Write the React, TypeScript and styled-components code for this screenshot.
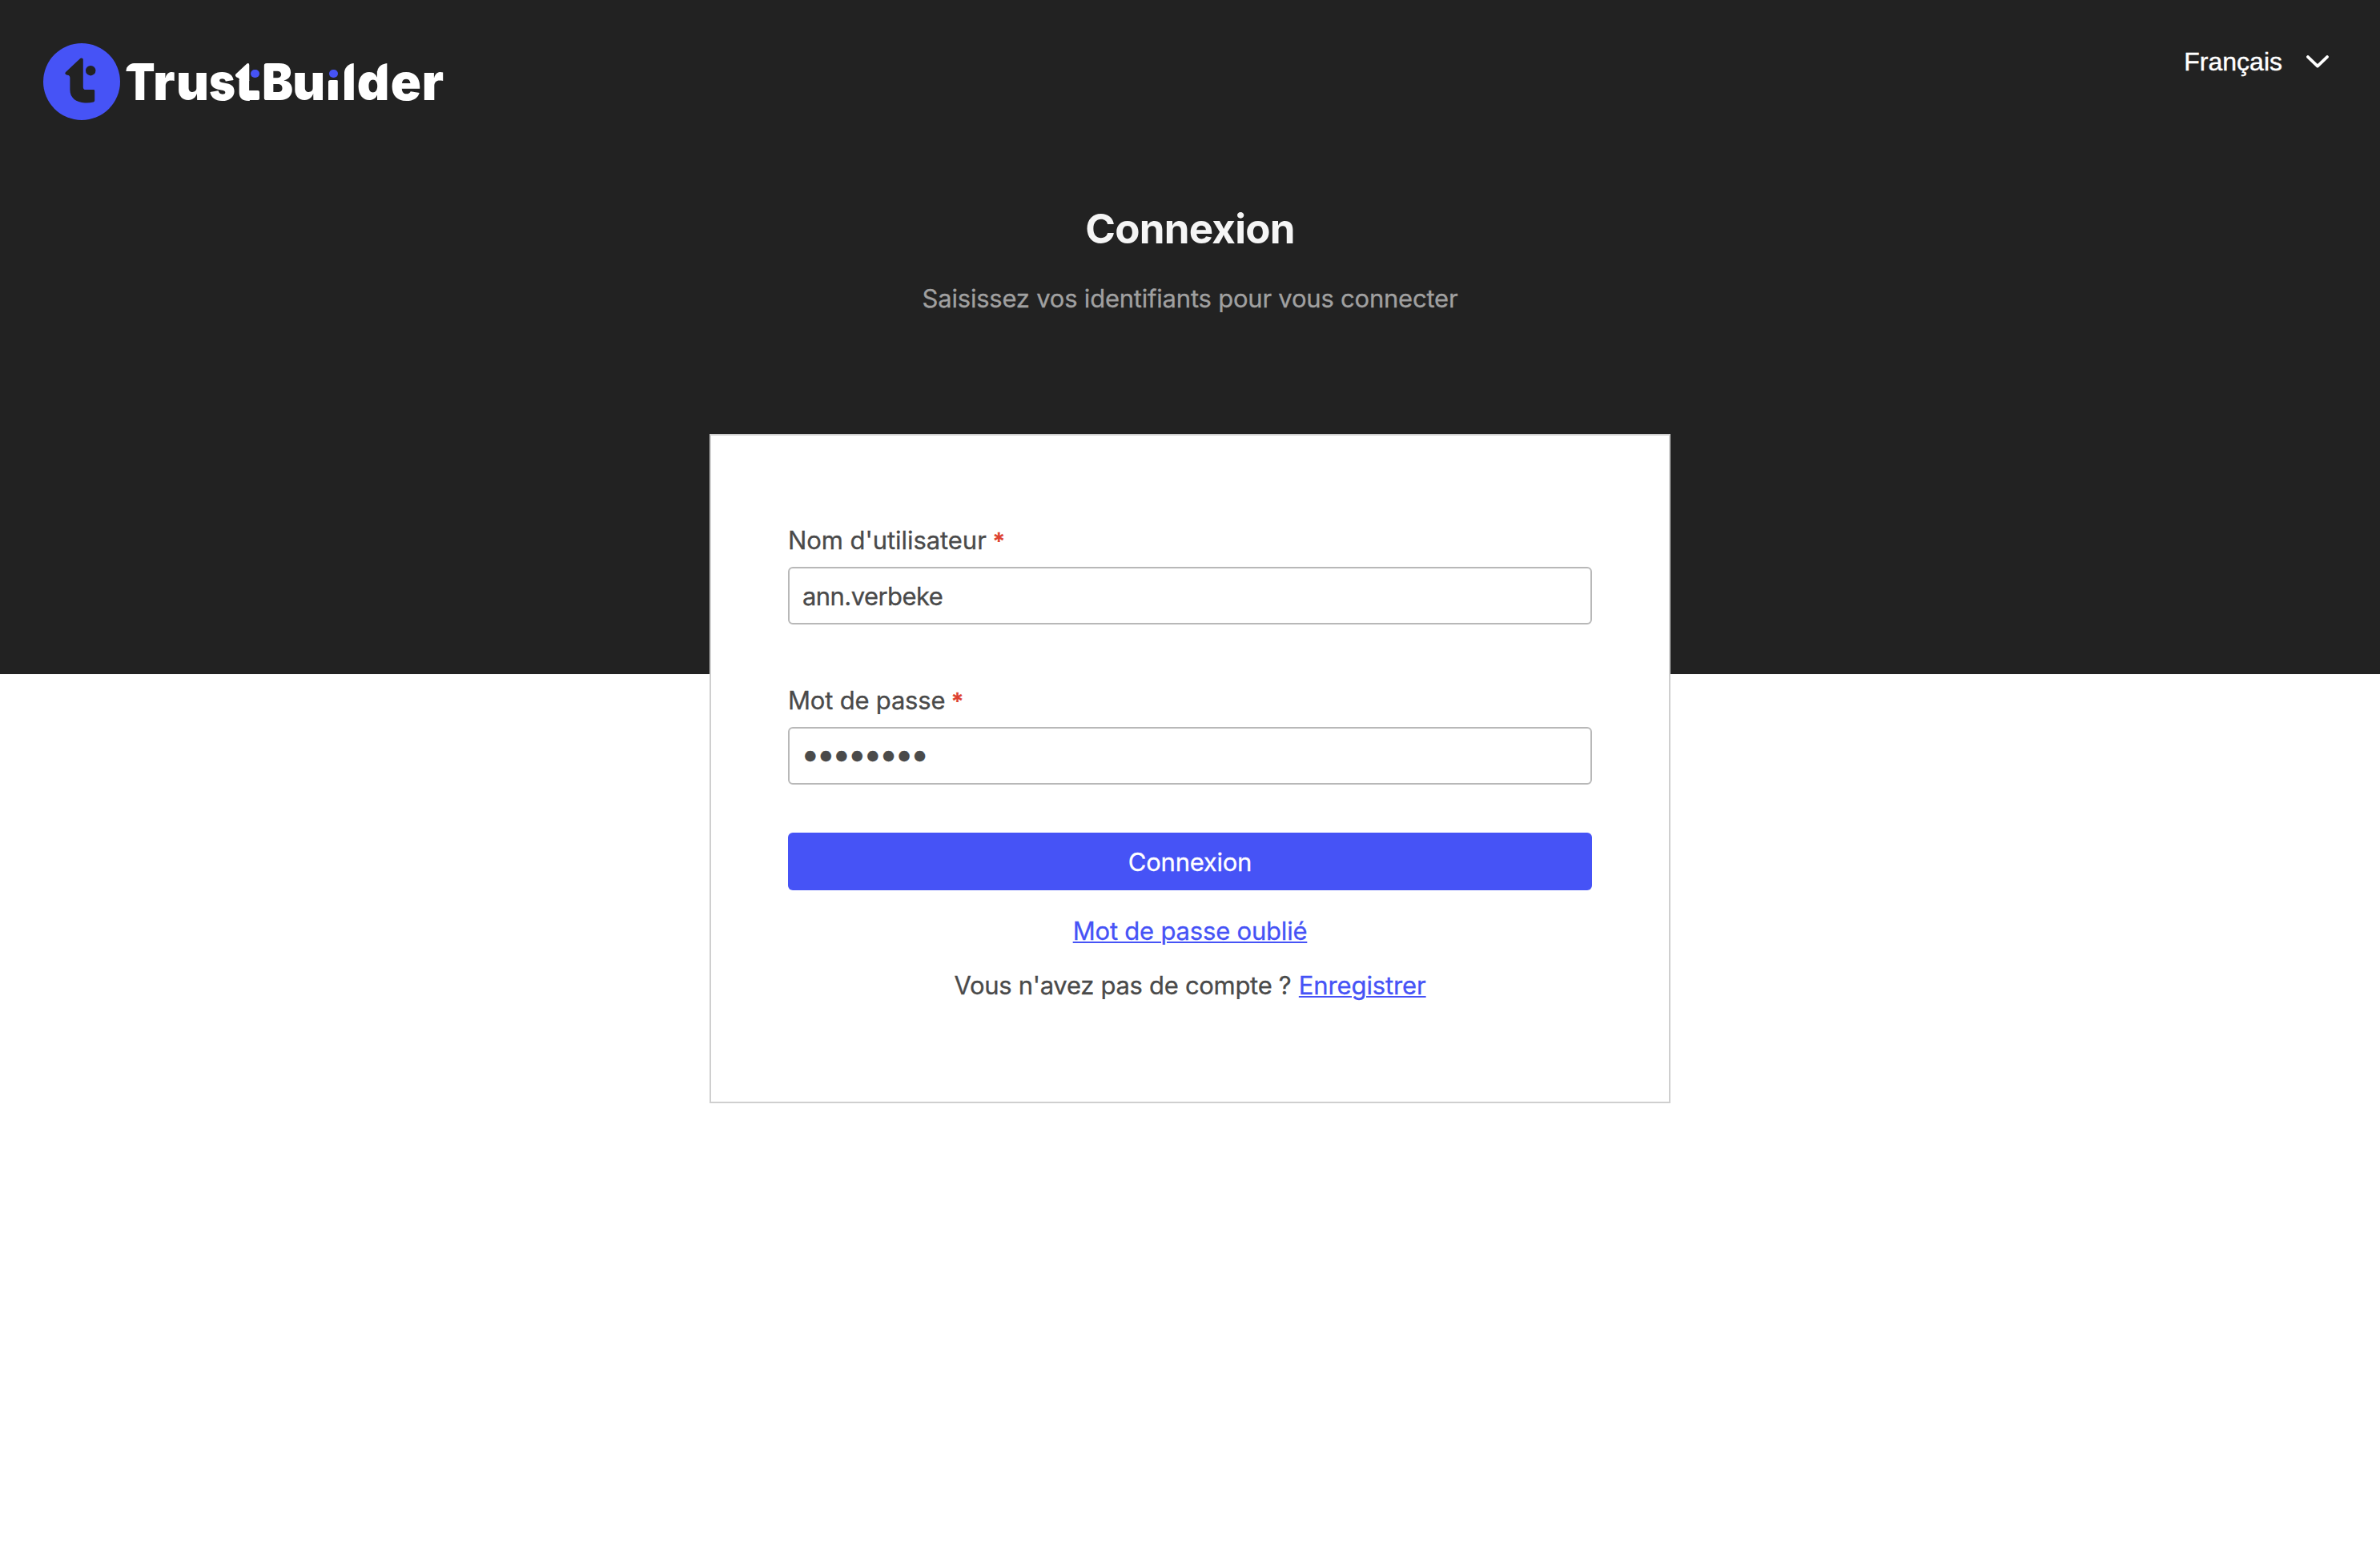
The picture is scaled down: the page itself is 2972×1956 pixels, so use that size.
import React from "react";
import styled, { createGlobalStyle } from "styled-components";

const BLUE = "#4653f6";

const GlobalStyle = createGlobalStyle`
  *, *::before, *::after { box-sizing: border-box; }
  body {
    margin: 0;
    background: #fff;
    color: #4a4a4a;
    font: 400 31px/48px Inter, "Liberation Sans", sans-serif;
    -webkit-text-stroke: 0.3px currentColor;
  }
`;

const Page = styled.div`
  min-height: 1956px;
  display: flex;
  flex-direction: column;
  align-items: center;
`;

const Hero = styled.header`
  width: 100%;
  height: 842px;
  background: #222;
  display: flex;
  flex-direction: column;
  align-items: center;
`;

const TopBar = styled.div`
  width: 100%;
  height: 256px;
  padding: 54px 64px 0 54px;
  display: flex;
  justify-content: space-between;
  align-items: flex-start;
`;

const Brand = styled.a`
  display: flex;
  align-items: flex-start;
  color: #fff;
`;

const Mark = styled.svg`
  display: block;
  width: 96px;
  height: 96px;
`;

const Wordmark = styled.span`
  display: block;
  margin: 16px 0 0 6px;
  white-space: nowrap;
  font: 900 63px/64px Inter, "Liberation Sans", sans-serif;
  -webkit-text-stroke: 0;
`;

const Letter = styled.span<{ $w: number }>`
  position: relative;
  display: inline-block;
  vertical-align: top;
  height: 64px;
  width: ${(p) => p.$w}px;
`;

const Glyph = styled.span<{ $sx?: number; $clip?: string }>`
  display: block;
  transform-origin: 0 0;
  transform: scaleX(${(p) => p.$sx ?? 1});
  clip-path: ${(p) => p.$clip ?? "none"};
`;

const FlagLetter = styled(Letter)`
  &::before {
    content: "";
    position: absolute;
    left: 0;
    top: 9px;
    width: 18px;
    height: 22px;
    background: #fff;
    clip-path: polygon(0 14.5px, 0.6px 13.4px, 14.5px 0.6px, 16px 0, 17px 0.6px, 17.4px 2px, 17.4px 22px, 5px 22px, 5px 19.8px, 4px 18.4px, 1.2px 17.2px, 0 15.6px);
  }
  &::after {
    content: "";
    position: absolute;
    left: 16px;
    top: 43.4px;
    width: 14px;
    height: 11.8px;
    border-radius: 0 2px 2px 0;
    background: #fff;
  }
`;

const Dot = styled.i<{ $x: number }>`
  position: absolute;
  left: ${(p) => p.$x}px;
  top: 16.7px;
  width: 10.6px;
  height: 10.6px;
  border-radius: 50%;
  background: ${BLUE};
`;

const Language = styled.button`
  display: flex;
  align-items: center;
  gap: 30px;
  margin-top: 1px;
  padding: 0;
  border: 0;
  background: none;
  color: #fff;
  font: 400 32px/44px "Liberation Sans", Arial, sans-serif;
  -webkit-text-stroke: 0.4px currentColor;
`;

const Chevron = styled.svg`
  display: block;
  width: 28px;
  height: 16px;
`;

const Title = styled.h1`
  margin: 0;
  color: #f5f5f5;
  font-size: 51px;
  font-weight: 700;
  line-height: 60px;
  letter-spacing: -0.75px;
  -webkit-text-stroke: 0;
`;

const Subtitle = styled.p`
  margin: 33px 0 0;
  color: #a0a0a0;
  letter-spacing: -0.22px;
`;

const Card = styled.form`
  position: relative;
  width: 1200px;
  height: 836px;
  margin-top: -300px;
  padding: 107px 96px 0;
  border: 2px solid #cfcfcf;
  background: #fff;
  display: flex;
  flex-direction: column;
`;

const Field = styled.div`
  display: flex;
  flex-direction: column;
  gap: 9px;
  & + & { margin-top: 71px; }
`;

const Label = styled.label<{ $track: number }>`
  height: 48px;
  letter-spacing: ${(p) => p.$track}px;
`;

const Required = styled.span`
  margin-left: -1px;
  color: #dd4130;
  font-size: 29px;
  font-weight: 600;
  line-height: 1;
`;

const Input = styled.input`
  width: 100%;
  height: 72px;
  padding: 0 16px;
  border: 2px solid #b8b8b8;
  border-radius: 6px;
  background: #fff;
  color: #4a4a4a;
  font: inherit;
  letter-spacing: -0.57px;
  outline: none;
`;

const PasswordInput = styled(Input)`
  padding: 0 14px 5px;
  font-size: 42px;
  letter-spacing: -4.1px;
`;

const Submit = styled.button`
  height: 72px;
  margin-top: 60px;
  padding: 2px 0 0;
  border: 0;
  border-radius: 6px;
  background: ${BLUE};
  color: #fff;
  font: inherit;
  letter-spacing: -0.25px;
`;

const Line = styled.p<{ $gap: number; $track: number }>`
  margin: ${(p) => p.$gap}px 0 0;
  text-align: center;
  letter-spacing: ${(p) => p.$track}px;
`;

const Link = styled.a`
  color: ${BLUE};
  text-decoration: underline;
  text-decoration-thickness: 2px;
  text-underline-offset: 2px;
`;

const RegisterLink = styled(Link)`
  margin-left: 1px;
  letter-spacing: -0.12px;
`;

function Logo() {
  return (
    <Brand aria-label="TrustBuilder">
      <Mark viewBox="0 0 96 96">
        <circle cx="48" cy="48" r="48" fill={BLUE} />
        <path
          d="M46.2 19 Q48.2 17.9 49.8 19.8 V54.7 Q49.8 58.1 53.2 58.1 H63 Q64.2 58.1 64.2 59.4 V71.6 Q64.2 73.1 62.6 73.5 Q58 74.8 52 74.5 C41 73.8 33.4 68.2 33.4 58.2 V43.4 Q33.4 40 30 39.7 Q27.6 39.4 27.3 37.8 Q27.2 36.7 28.6 35.4 Z"
          fill="#222"
        />
        <circle cx="59.2" cy="34.2" r="6.2" fill="#222" />
      </Mark>
      <Wordmark>
        <Letter $w={35.2}>
          <Glyph $sx={0.87} $clip="inset(9px -10px -5px 1px round 12px 0 0 0)">T</Glyph>
        </Letter>
        <Letter $w={28.7}><Glyph>r</Glyph></Letter>
        <Letter $w={41.1}><Glyph>u</Glyph></Letter>
        <Letter $w={32.9}><Glyph $sx={0.89}>s</Glyph></Letter>
        <FlagLetter $w={33.4}>
          <Glyph $clip="inset(30px 15.4px -5px 0)">t</Glyph>
          <Dot $x={19.6} />
        </FlagLetter>
        <Letter $w={38.1}>
          <Glyph $sx={0.93} $clip="inset(9px -9px 8.8px 2.6px round 4px 0 0 4px)">B</Glyph>
        </Letter>
        <Letter $w={42.1}><Glyph>u</Glyph></Letter>
        <Letter $w={19.6}>
          <Glyph $sx={0.95} $clip="inset(30px 3px -5px 3px round 3px 3px 0 0)">i</Glyph>
          <Dot $x={3.7} />
        </Letter>
        <Letter $w={18.8}>
          <Glyph $sx={0.95} $clip="inset(9px 0 -5px 3px round 13px 0 0 0)">l</Glyph>
        </Letter>
        <Letter $w={42}>
          <Glyph $clip={'path("M-2 19 H25.4 C26 13.5 31 9.3 39 9 V60 H-2 Z")'}>d</Glyph>
        </Letter>
        <Letter $w={39}><Glyph>e</Glyph></Letter>
        <Letter $w={28}><Glyph>r</Glyph></Letter>
      </Wordmark>
    </Brand>
  );
}

export default function App() {
  return (
    <Page>
      <GlobalStyle />
      <Hero>
        <TopBar>
          <Logo />
          <Language type="button">
            Français
            <Chevron viewBox="0 0 28 16" fill="none">
              <path d="M2 2.1 L14 13.6 L26 2.1" stroke="#fff" strokeWidth="3.8" strokeLinecap="round" strokeLinejoin="round" />
            </Chevron>
          </Language>
        </TopBar>
        <Title>Connexion</Title>
        <Subtitle>Saisissez vos identifiants pour vous connecter</Subtitle>
      </Hero>
      <Card>
        <Field>
          <Label $track={-0.06} htmlFor="user">
            Nom d'utilisateur <Required>*</Required>
          </Label>
          <Input id="user" type="text" defaultValue="ann.verbeke" />
        </Field>
        <Field>
          <Label $track={-0.2} htmlFor="pass">
            Mot de passe <Required>*</Required>
          </Label>
          <PasswordInput id="pass" type="password" defaultValue="password" />
        </Field>
        <Submit type="button">Connexion</Submit>
        <Line $gap={27} $track={-0.2}>
          <Link>Mot de passe oublié</Link>
        </Line>
        <Line $gap={20} $track={-0.3}>
          Vous n'avez pas de compte ? <RegisterLink>Enregistrer</RegisterLink>
        </Line>
      </Card>
    </Page>
  );
}
